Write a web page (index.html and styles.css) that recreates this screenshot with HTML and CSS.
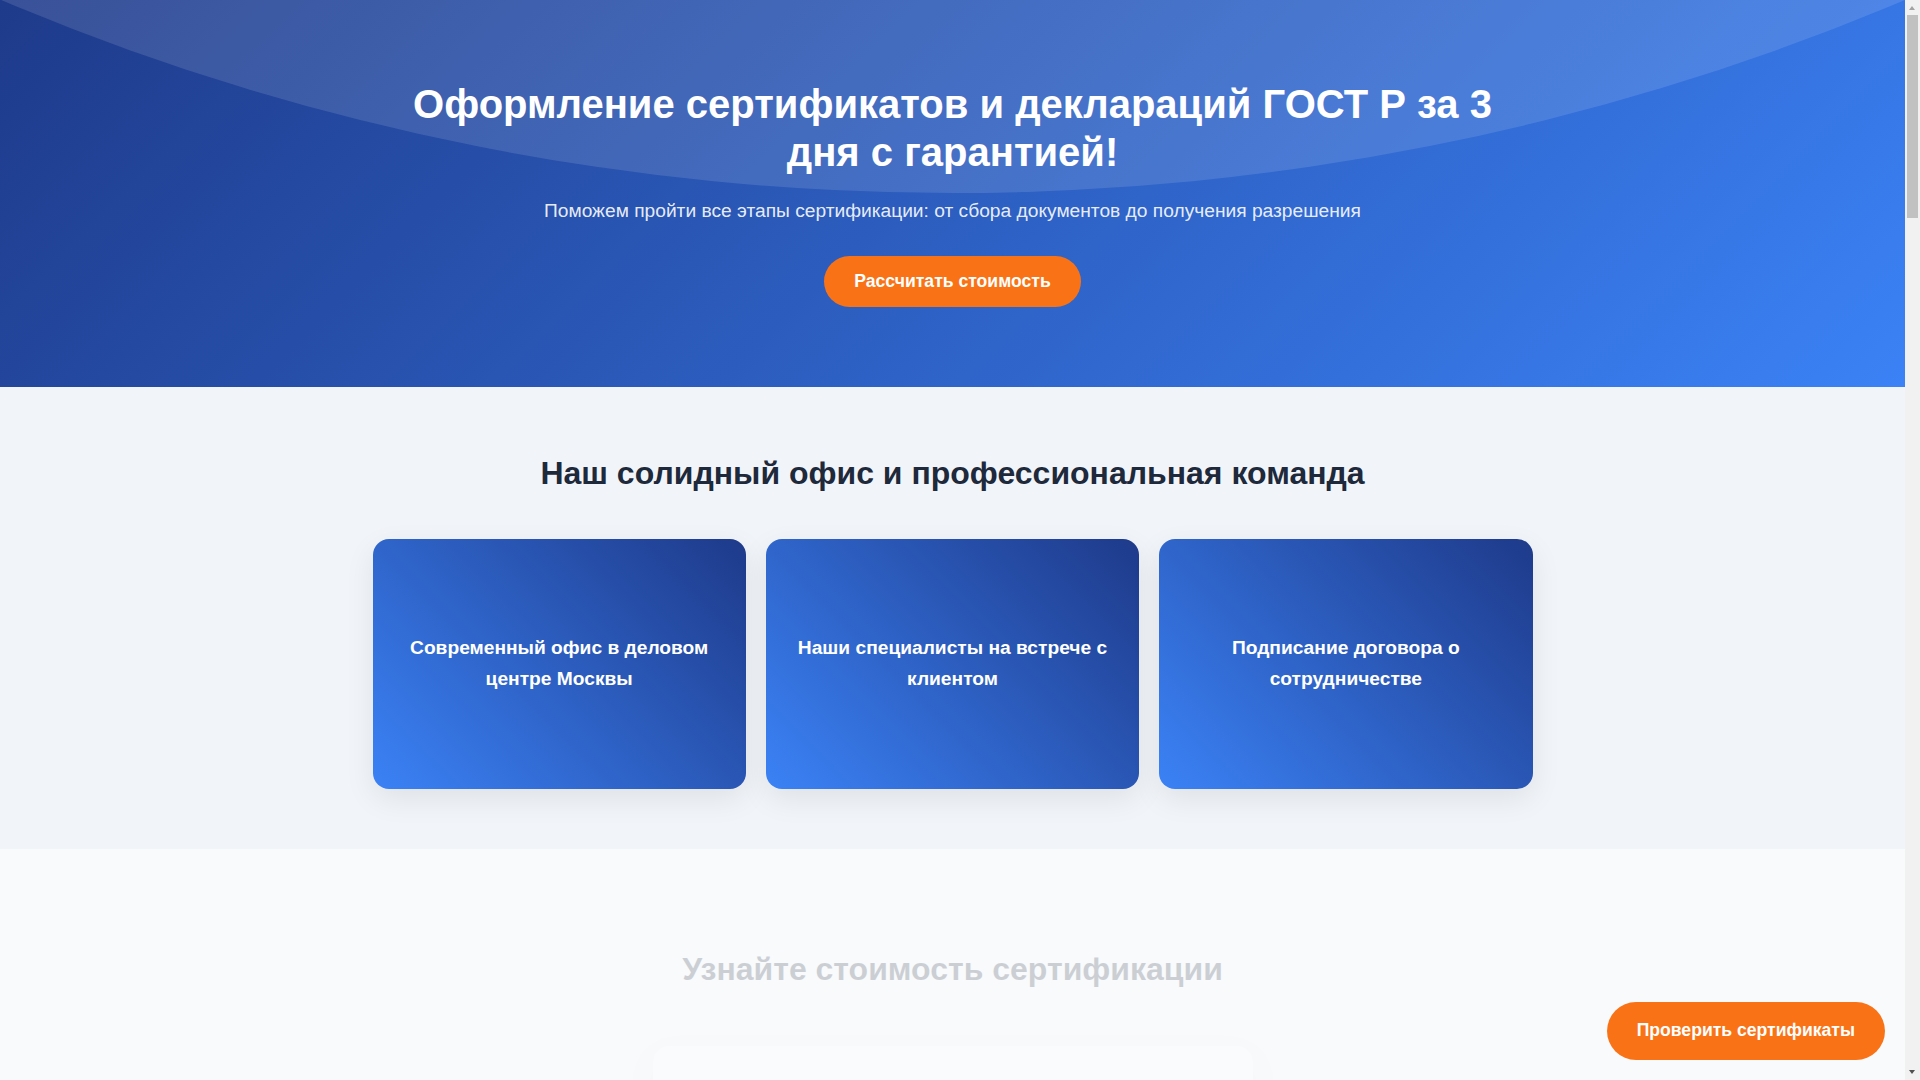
FILE: index.html
```html
<!DOCTYPE html>
<html lang="ru">
<head>
<meta charset="utf-8">
<title>Сертификация ГОСТ Р</title>
<link rel="stylesheet" href="styles.css">
</head>
<body>
<section class="hero">
  <div class="container hero-inner">
    <h1 class="hero-title">Оформление сертификатов и деклараций ГОСТ Р за 3 дня с гарантией!</h1>
    <p class="hero-subtitle">Поможем пройти все этапы сертификации: от сбора документов до получения разрешения</p>
    <a class="btn btn-primary" href="#calc">Рассчитать стоимость</a>
  </div>
</section>

<section class="office">
  <div class="container">
    <h2 class="section-title">Наш солидный офис и профессиональная команда</h2>
    <div class="office-grid">
      <div class="office-card"><span>Современный офис в деловом центре Москвы</span></div>
      <div class="office-card"><span>Наши специалисты на встрече с клиентом</span></div>
      <div class="office-card"><span>Подписание договора о сотрудничестве</span></div>
    </div>
  </div>
</section>

<section class="calc" id="calc">
  <div class="container">
    <h2 class="section-title faded">Узнайте стоимость сертификации</h2>
    <form class="calc-form faded">
      <label class="field-label">Тип документа</label>
      <div class="field"></div>
      <label class="field-label">Вид продукции</label>
      <div class="field"></div>
      <label class="field-label">Ваш телефон</label>
      <div class="field"></div>
    </form>
  </div>
</section>

<a class="floating-btn" href="#">Проверить сертификаты</a>

<div class="scrollbar" aria-hidden="true">
  <span class="scroll-arrow scroll-up"></span>
  <span class="scroll-thumb"></span>
  <span class="scroll-arrow scroll-down"></span>
</div>
</body>
</html>
```

FILE: styles.css
```css
* { box-sizing: border-box; }

html, body {
  margin: 0;
  padding: 0;
}

body {
  font-family: "Liberation Sans", Arial, sans-serif;
  color: #1e293b;
  background: #f8fafc;
  margin-right: 15px;
}

.container {
  max-width: 1200px;
  margin: 0 auto;
  padding: 0 20px;
}

/* HERO */
.hero {
  position: relative;
  overflow: hidden;
  background: linear-gradient(135deg, #1e3a8a 0%, #3b82f6 100%);
  color: #fff;
  padding: 80px 0;
}

.hero::before {
  content: "";
  position: absolute;
  left: 50%;
  top: -4695px;
  width: 4888px;
  height: 4888px;
  margin-left: -2444px;
  border-radius: 50%;
  background: rgba(255, 255, 255, 0.12);
}

.hero-inner {
  position: relative;
  z-index: 1;
  display: flex;
  flex-direction: column;
  align-items: center;
  text-align: center;
}

.hero-title {
  max-width: 1100px;
  margin: 0 0 20px;
  font-size: 40px;
  line-height: 1.2;
  font-weight: 700;
}

.hero-subtitle {
  margin: 0 0 30px;
  font-size: 19.2px;
  line-height: 30px;
  color: rgba(255, 255, 255, 0.9);
}

.btn {
  display: inline-block;
  text-decoration: none;
  font-weight: 700;
  border-radius: 50px;
}

.btn-primary {
  background: #f97316;
  color: #fff;
  font-size: 17.6px;
  line-height: 20.5px;
  padding: 15px 30px;
}

/* OFFICE */
.office {
  background: #f1f5f9;
  padding: 62px 0 60px;
}

.section-title {
  margin: 0 0 42px;
  text-align: center;
  font-size: 32px;
  line-height: 48px;
  font-weight: 700;
  color: #1e293b;
}

.office-grid {
  display: grid;
  grid-template-columns: repeat(3, 1fr);
  gap: 20px;
}

.office-card {
  height: 250px;
  border-radius: 16px;
  background: linear-gradient(45deg, #3b82f6 0%, #1e3a8a 100%);
  box-shadow: 0 10px 30px rgba(0, 0, 0, 0.08);
  display: flex;
  align-items: center;
  justify-content: center;
  text-align: center;
  padding: 24px;
  color: #fff;
  font-size: 19.2px;
  font-weight: 700;
  line-height: 1.6;
}

/* CALC */
.calc {
  background: #f8fafc;
  padding: 96px 0 80px;
}

.calc .section-title {
  margin-bottom: 53px;
}

.faded {
  opacity: 0.2;
}

.calc-form {
  display: block;
  max-width: 600px;
  margin: 0 auto;
  background: #fff;
  border-radius: 16px;
  box-shadow: 0 10px 30px rgba(0, 0, 0, 0.05);
  padding: 40px;
}

.field-label {
  display: block;
  font-size: 15px;
  font-weight: 700;
  margin-bottom: 8px;
  color: #1e293b;
}

.field {
  height: 48px;
  border: 1px solid #e2e8f0;
  border-radius: 8px;
  margin-bottom: 20px;
}

/* FLOATING */
.floating-btn {
  position: fixed;
  right: 35px;
  bottom: 20px;
  z-index: 10;
  background: #f97316;
  color: #fff;
  text-decoration: none;
  font-weight: 700;
  font-size: 17.6px;
  line-height: 21.6px;
  padding: 18px 30px;
  border-radius: 50px;
}

/* Classic browser scrollbar */
.scrollbar {
  position: fixed;
  top: 0;
  right: 0;
  width: 15px;
  height: 100vh;
  background: #f1f1f1;
  z-index: 20;
}

.scroll-thumb {
  position: absolute;
  top: 15px;
  left: 2px;
  width: 11px;
  height: 203px;
  background: #c1c1c1;
}

.scroll-arrow {
  position: absolute;
  left: 4px;
  width: 0;
  height: 0;
  border-left: 3.5px solid transparent;
  border-right: 3.5px solid transparent;
}

.scroll-up {
  top: 6px;
  border-bottom: 4px solid #a3a3a3;
}

.scroll-down {
  bottom: 6px;
  border-top: 4px solid #505050;
}
```
